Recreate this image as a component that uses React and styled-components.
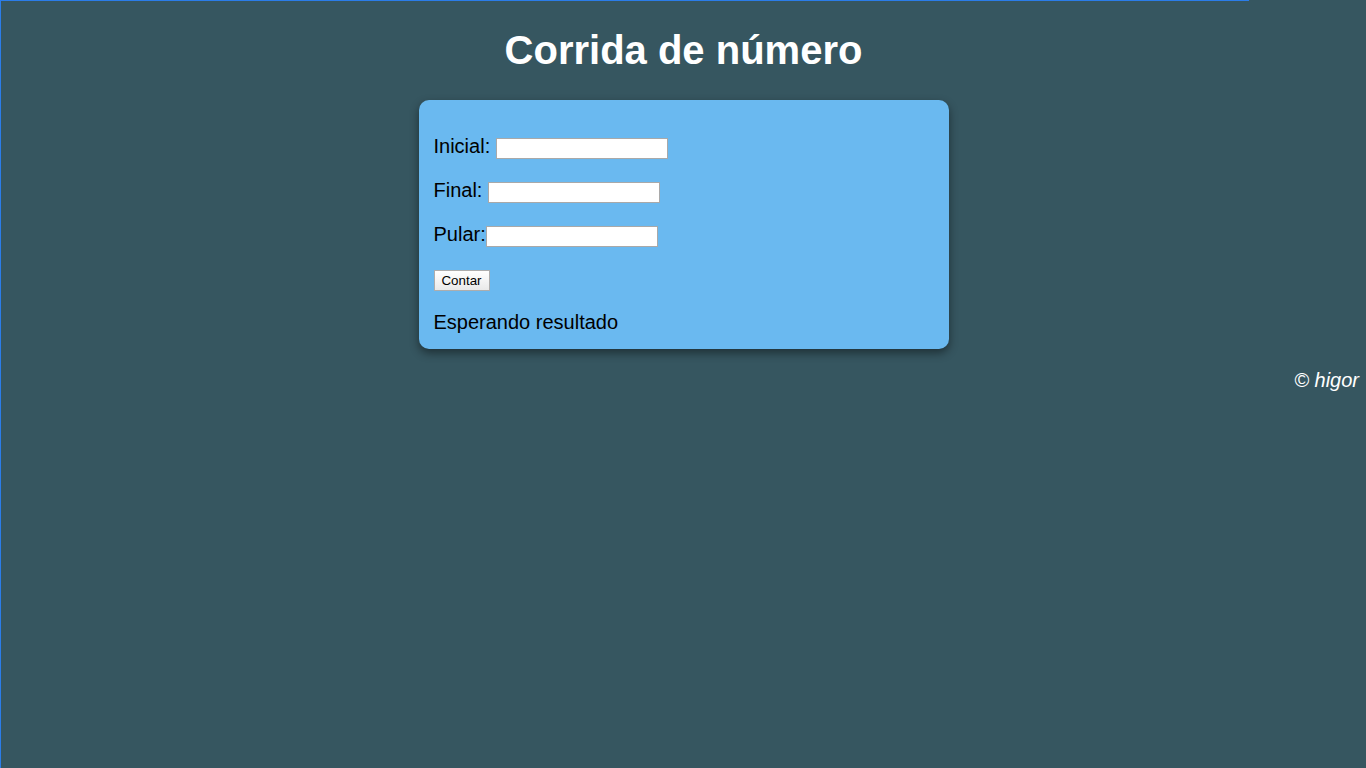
import React from 'react';
import styled, { createGlobalStyle } from 'styled-components';

const GlobalStyle = createGlobalStyle`
  html, body {
    margin: 0;
    padding: 0;
    background: #365660;
  }
  body {
    font-family: "Liberation Sans", Arial, sans-serif;
  }
`;

const Page = styled.div`
  min-height: 768px;
  box-sizing: border-box;
  border-left: 1px solid #2b7de9;
  background: #365660;
  overflow: hidden;
`;

const TopLine = styled.div`
  width: 1248px;
  height: 1px;
  background: #2b7de9;
`;

const Title = styled.h1`
  margin: 26px 0 27px;
  text-align: center;
  color: #fff;
  font-size: 40px;
  line-height: 46px;
  font-weight: bold;
`;

const Card = styled.div`
  width: 530px;
  box-sizing: border-box;
  margin: 0 auto;
  padding: 34px 15px 15px;
  background: #6ab9f0;
  border-radius: 10px;
  box-shadow: 0 4px 10px rgba(0, 0, 0, 0.45);
`;

const Field = styled.div`
  font-size: 20px;
  line-height: 24px;
  color: #000;
  margin-top: ${(props) => props.$gap || 0}px;
`;

const Input = styled.input`
  box-sizing: border-box;
  width: 172px;
  height: 21px;
  padding: 2px 2px;
  border: 1px solid #a9a9a9;
  background: #fff;
  font-family: "Liberation Sans", Arial, sans-serif;
  font-size: 13.33px;
  vertical-align: baseline;
  &:focus {
    outline: none;
  }
`;

const Button = styled.button`
  display: block;
  box-sizing: border-box;
  width: 56px;
  height: 21px;
  margin-top: 23px;
  padding: 1px 6px;
  border: 1px solid #adadad;
  border-radius: 0;
  background: linear-gradient(#ffffff, #e9e9e9);
  font-family: "Liberation Sans", Arial, sans-serif;
  font-size: 13.33px;
  color: #000;
`;

const Result = styled.div`
  margin-top: 19px;
  font-size: 20px;
  line-height: 24px;
  color: #000;
`;

const Footer = styled.footer`
  margin-top: 19px;
  padding-right: 7px;
  text-align: right;
  color: #fff;
  font-style: italic;
  font-size: 20px;
  line-height: 24px;
`;

function App() {
  return (
    <Page>
      <GlobalStyle />
      <TopLine />
      <Title>Corrida de número</Title>
      <Card>
        <Field>
          Inicial: <Input type="text" />
        </Field>
        <Field $gap={19}>
          Final: <Input type="text" />
        </Field>
        <Field $gap={19}>
          Pular:<Input type="text" />
        </Field>
        <Button>Contar</Button>
        <Result>Esperando resultado</Result>
      </Card>
      <Footer>© higor</Footer>
    </Page>
  );
}

export default App;
